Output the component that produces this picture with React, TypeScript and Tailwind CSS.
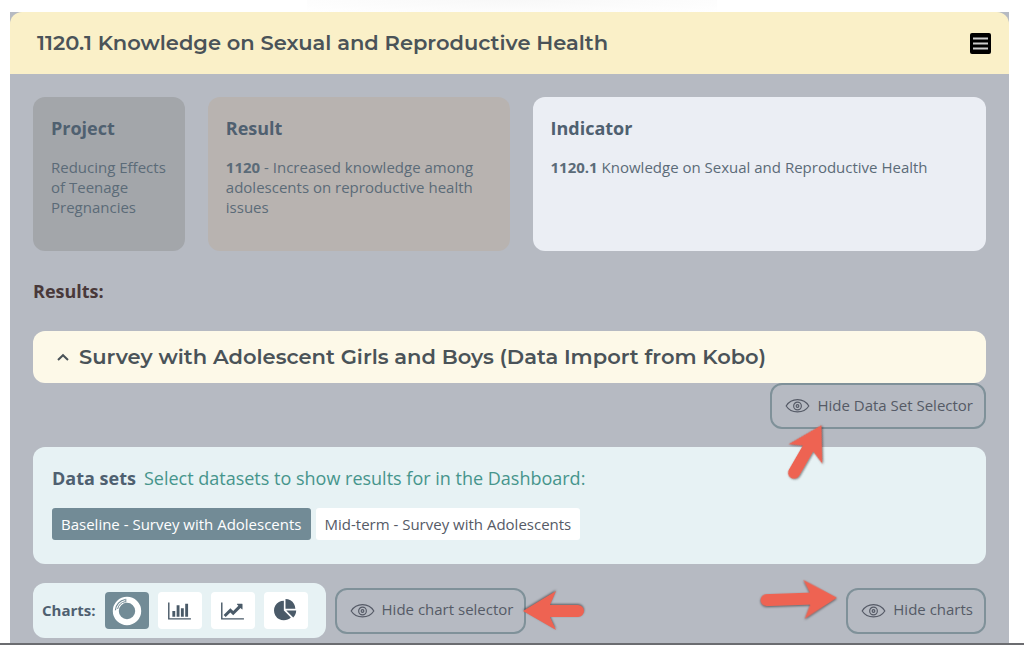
import type { ReactNode } from "react";
import { clsx } from "clsx";

const CHARTS = [
  { id: "donut", label: "Donut chart" },
  { id: "bar", label: "Bar chart" },
  { id: "line", label: "Line chart" },
  { id: "pie", label: "Pie chart" },
];

const DATASETS = [
  { name: "Baseline - Survey with Adolescents", active: true },
  { name: "Mid-term - Survey with Adolescents", active: false },
];

function ChartIcon({ id }: { id: string }) {
  if (id === "donut") {
    return (
      <svg viewBox="0 0 30 30" className="w-[30px] h-[30px]" fill="none" aria-hidden="true">
        <circle cx="15" cy="15" r="11.2" stroke="#fff" strokeWidth="6" />
        <path d="M3.4 14.2A11.7 11.7 0 0 1 13.2 3.5" stroke="#728b96" strokeWidth="1.2" />
        <path d="M5.6 13A9.8 9.8 0 0 1 13.4 5.6" stroke="#728b96" strokeWidth="1" />
        <path d="M13.8 2.8V6.5" stroke="#728b96" strokeWidth="1" />
      </svg>
    );
  }
  if (id === "bar") {
    return (
      <svg viewBox="0 0 2048 1792" className="w-[23px] h-5" fill="currentColor" aria-hidden="true">
        <path d="M640 896v512h-256v-512h256zM1024 384v1024h-256v-1024h256zM2048 1536v128h-2048v-1536h128v1408h1920zM1408 640v768h-256v-768h256zM1792 256v1152h-256v-1152h256z" />
      </svg>
    );
  }
  if (id === "line") {
    return (
      <svg viewBox="0 0 2048 1792" className="w-[23px] h-5" fill="currentColor" aria-hidden="true">
        <path d="M2048 1536v128h-2048v-1536h128v1408h1920zM1920 288v435q0 21-19.5 29.5t-35.5-7.5l-121-121-633 633q-10 10-23 10t-23-10l-233-233-416 416-192-192 585-585q10-10 23-10t23 10l233 233 464-464-121-121q-16-16-7.5-35.5t29.5-19.5h435q14 0 23 9t9 23z" />
      </svg>
    );
  }
  return (
    <svg viewBox="0 0 1792 1792" className="w-[23px] h-[23px]" fill="currentColor" aria-hidden="true">
      <path d="M768 890l546 546q-106 108-247.5 168t-298.5 60q-209 0-385.5-103t-279.5-279.5-103-385.5 103-385.5 279.5-279.5 385.5-103v762zM955 896h773q0 157-60 298.5t-168 247.5zM1664 768h-768v-768q209 0 385.5 103t279.5 279.5 103 385.5z" />
    </svg>
  );
}

function EyeIcon() {
  return (
    <svg viewBox="0 0 26 16" className="w-[25px] h-4 shrink-0" fill="none" stroke="currentColor" aria-hidden="true">
      <path d="M1.2 8C6.5 -0.8 19.5 -0.8 24.8 8C19.5 16.2 6.5 16.2 1.2 8Z" strokeWidth="1.2" />
      <circle cx="13" cy="8" r="4" strokeWidth="1.2" />
      <circle cx="13" cy="8" r="1.4" strokeWidth="1.2" />
    </svg>
  );
}

// Points right by default, the tip sits at the right edge
function Arrow({ long, className }: { long?: boolean; className: string }) {
  return (
    <svg
      viewBox={long ? "-15 0 79 42" : "0 0 64 42"}
      className={clsx(
        "absolute h-[42px] pointer-events-none drop-shadow-[0_1px_1px_rgba(0,0,0,0.5)]",
        long ? "w-[79px]" : "w-16",
        className
      )}
      fill="#ee6352"
      aria-hidden="true"
    >
      <path
        d={
          long
            ? "M63 21L30 41L36 27H-7.500A6 6 0 0 1 -7.500 15H36L30 2Z"
            : "M63 21L30 41L36 27H8A6 6 0 0 1 8 15H36L30 2Z"
        }
      />
    </svg>
  );
}

function HideButton({ children }: { children: ReactNode }) {
  return (
    <button
      type="button"
      className="flex items-center gap-[7px] h-[46px] pl-[13px] pr-[11px] border-2 border-[#7f9199] rounded-xl text-[15px] text-[#555a66] whitespace-nowrap"
    >
      <EyeIcon />
      <span className="pb-0.5">{children}</span>
    </button>
  );
}

function InfoCard({ title, className, children }: { title: string; className: string; children: ReactNode }) {
  return (
    <section className={clsx("rounded-xl min-h-[154px] px-[18px] pt-[18px] text-[#5b6b78]", className)}>
      <h2 className="text-lg leading-[26px] font-bold text-[#4f6070]">{title}</h2>
      <p className="mt-4 text-[15px] leading-5">{children}</p>
    </section>
  );
}

export default function App() {
  return (
    <div className="bg-white border-b-2 border-[#6b6c70] font-['Open_Sans',sans-serif]">
      <div className="h-3 w-2/5 mx-auto bg-radial-[at_50%_0%] from-[#f8f8f8] to-white" />
      <main className="ml-2.5 mr-[15px] bg-[#b6bac2]">
        <header className="flex items-center justify-between h-[62px] pl-[27px] pr-[18px] bg-[#faf0c8] rounded-t-xl">
          <h1 className="font-['Montserrat','Inter',sans-serif] text-[21px] font-semibold text-[#4a5358]">
            1120.1 Knowledge on Sexual and Reproductive Health
          </h1>
          <button type="button" aria-label="Menu">
            <svg viewBox="0 0 21 21" className="w-[21px] h-[21px]" aria-hidden="true">
              <rect width="21" height="21" rx="2" fill="#000" />
              <path d="M3 5.5H18M3 10.5H18M3 15.5H18" stroke="#ccc" strokeWidth="1.8" />
            </svg>
          </button>
        </header>

        <div className="px-[23px] pt-[23px] pb-[5px]">
          <div className="grid grid-cols-[152fr_302fr_454fr] gap-[23px]">
            <InfoCard title="Project" className="bg-[#a3a6aa]">
              Reducing Effects of Teenage Pregnancies
            </InfoCard>
            <InfoCard title="Result" className="bg-[#b8b3b0]">
              <b>1120</b> - Increased knowledge among adolescents on reproductive health issues
            </InfoCard>
            <InfoCard title="Indicator" className="bg-[#ebeef4]">
              <b>1120.1</b> Knowledge on Sexual and Reproductive Health
            </InfoCard>
          </div>

          <h2 className="mt-7 text-lg leading-6 font-bold text-[#49393a]">Results:</h2>

          {/* Survey */}
          <button
            type="button"
            aria-expanded="true"
            className="mt-7 w-full h-[52px] flex items-center gap-2.5 rounded-xl pl-6 bg-[#fdf9e8] text-[#4a5358]"
          >
            <svg viewBox="0 0 12 8" className="w-3 h-2" fill="none" stroke="currentColor" strokeWidth="2" aria-hidden="true">
              <path d="M1 7L6 2.2L11 7" />
            </svg>
            <span className="font-['Montserrat','Inter',sans-serif] text-[21px] font-semibold">
              Survey with Adolescent Girls and Boys (Data Import from Kobo)
            </span>
          </button>

          <div className="flex justify-end">
            <div className="relative">
              <HideButton>Hide Data Set Selector</HideButton>
              <Arrow className="left-1 top-12 -rotate-60" />
            </div>
          </div>

          {/* Data sets */}
          <section className="mt-[18px] rounded-xl bg-[#e7f2f4] px-[19px] pt-[18px] pb-6">
            <div className="flex items-baseline gap-2 text-lg leading-[26px]">
              <h3 className="font-bold text-[#4f6070]">Data sets</h3>
              <p className="text-[#46958c]">Select datasets to show results for in the Dashboard:</p>
            </div>
            <div className="mt-[17px] flex gap-[5px]">
              {DATASETS.map((d) => (
                <button
                  key={d.name}
                  type="button"
                  aria-pressed={d.active}
                  className={clsx(
                    "h-8 px-[9px] rounded-[3px] text-[15px] leading-5",
                    d.active ? "bg-[#728b96] text-white" : "bg-white text-[#555a66]"
                  )}
                >
                  {d.name}
                </button>
              ))}
            </div>
          </section>

          {/* Charts */}
          <div className="mt-[19px] flex items-center">
            <div className="flex items-center gap-[9px] h-[55px] rounded-xl bg-[#e7f2f4] pl-[9px] pr-[18px]">
              <h3 className="text-[15px] font-bold text-[#4f6070]">Charts:</h3>
              {CHARTS.map((c, i) => (
                <button
                  key={c.id}
                  type="button"
                  aria-label={c.label}
                  aria-pressed={i === 0}
                  className={clsx(
                    "w-11 h-[37px] rounded-[4px] flex items-center justify-center text-[#4a5a68]",
                    i === 0 ? "bg-[#728b96]" : "bg-white"
                  )}
                >
                  <ChartIcon id={c.id} />
                </button>
              ))}
            </div>
            <div className="relative ml-[9px]">
              <HideButton>Hide chart selector</HideButton>
              <Arrow className="left-full -ml-1 top-0.5 rotate-180" />
            </div>
            <div className="relative ml-auto">
              <HideButton>Hide charts</HideButton>
              <Arrow long className="right-full mr-2 -top-2.5 -rotate-2" />
            </div>
          </div>
        </div>
      </main>
    </div>
  );
}
